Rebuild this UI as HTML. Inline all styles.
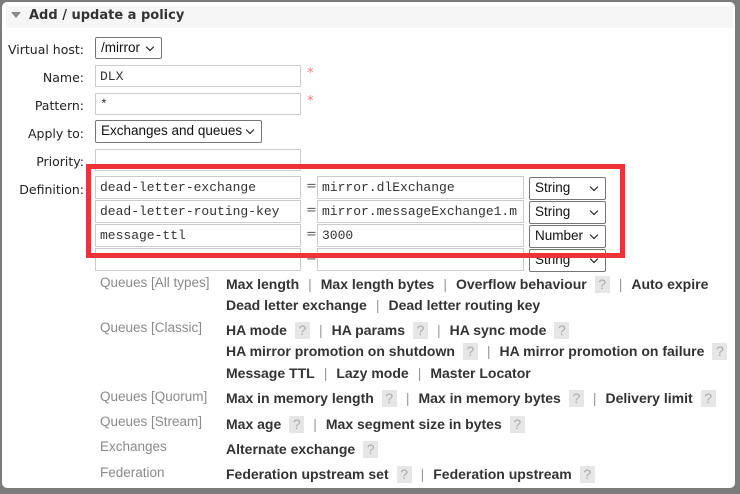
<!DOCTYPE html><html><head><style>
body{margin:0;width:740px;height:494px;background:#7b7b7b;font-family:"DejaVu Sans","Liberation Sans",sans-serif;position:relative;overflow:hidden}
#in{position:absolute;left:2px;top:2px;width:733px;height:486px;background:#fff;border-radius:5px}
.a{position:absolute;white-space:nowrap}
.hd{left:6px;top:6px;width:727px;height:22px;background:#f6f6f6}
.lab{font-size:12.5px;color:#222;text-align:right;width:84px;left:0}
.in{position:absolute;border:1px solid #ccc;background:#fff;box-sizing:border-box;font-family:"Liberation Mono",monospace;font-size:13px;color:#333;padding:3px 4px;overflow:hidden;white-space:nowrap}
.sel{position:absolute;border:1px solid #767676;border-radius:2px;background:#fff;box-sizing:border-box;font-family:"Liberation Sans",sans-serif;font-size:13.5px;color:#111;padding:2px 5px;white-space:nowrap;overflow:hidden}
.sel:after{content:"";position:absolute;right:8px;top:6px;width:5px;height:5px;border-right:1.6px solid #111;border-bottom:1.6px solid #111;transform:rotate(45deg)}
.cat{left:100px;font-size:13.5px;color:#8a8a8a;font-family:"Liberation Sans",sans-serif}
.ln{left:226px;font-size:14px;font-weight:bold;color:#333;font-family:"Liberation Sans",sans-serif}
.ln i{font-style:normal;font-weight:normal;color:#999;margin:0 9px}
.q{display:inline-block;background:#e6e6e6;color:#aaa;font-weight:normal;width:15px;text-align:center;margin-left:8px;line-height:17px}
.st{color:#f08080;font-size:13px}
</style></head><body><div id="in"></div>
<div class="a hd"></div>
<div class="a" style="left:11px;top:12px;width:0;height:0;border-left:5px solid transparent;border-right:5px solid transparent;border-top:6px solid #888"></div>
<div class="a" style="left:29px;top:8px;font-size:13px;font-weight:bold;color:#333">Add / update a policy</div>
<div class="a lab" style="top:42px">Virtual host:</div>
<div class="a lab" style="top:70px">Name:</div>
<div class="a lab" style="top:98px">Pattern:</div>
<div class="a lab" style="top:126px">Apply to:</div>
<div class="a lab" style="top:154px">Priority:</div>
<div class="a lab" style="top:182px">Definition:</div>
<div class="sel" style="left:95px;top:37px;width:67px;height:22px">/mirror</div>
<div class="in" style="left:95px;top:65px;width:206px;height:22px">DLX</div>
<div class="a st" style="left:307px;top:66px">*</div>
<div class="in" style="left:95px;top:93px;width:206px;height:22px">*</div>
<div class="a st" style="left:307px;top:94px">*</div>
<div class="sel" style="left:95px;top:120px;width:167px;height:23px">Exchanges and queues</div>
<div class="in" style="left:95px;top:149px;width:206px;height:22px"></div>
<div class="in" style="left:95px;top:176px;width:206px;height:23px">dead-letter-exchange</div>
<div class="in" style="left:95px;top:200px;width:206px;height:23px">dead-letter-routing-key</div>
<div class="in" style="left:95px;top:224px;width:206px;height:23px">message-ttl</div>
<div class="in" style="left:95px;top:248px;width:206px;height:23px"></div>
<div class="a" style="left:306px;top:179px;font-size:13px;color:#666">=</div>
<div class="a" style="left:306px;top:203px;font-size:13px;color:#666">=</div>
<div class="a" style="left:306px;top:227px;font-size:13px;color:#666">=</div>
<div class="a" style="left:306px;top:251px;font-size:13px;color:#666">=</div>
<div class="in" style="left:317px;top:176px;width:207px;height:23px">mirror.dlExchange</div>
<div class="in" style="left:317px;top:200px;width:207px;height:23px">mirror.messageExchange1.m</div>
<div class="in" style="left:317px;top:224px;width:207px;height:23px">3000</div>
<div class="in" style="left:317px;top:248px;width:207px;height:23px"></div>
<div class="sel" style="left:529px;top:177px;width:77px;height:23px">String</div>
<div class="sel" style="left:529px;top:201px;width:77px;height:23px">String</div>
<div class="sel" style="left:529px;top:225px;width:77px;height:23px">Number</div>
<div class="sel" style="left:529px;top:249px;width:77px;height:23px">String</div>
<div class="a" style="left:86px;top:164px;width:529px;height:84px;border:5px solid #ee3338"></div>
<div class="a cat" style="top:275px">Queues [All types]</div>
<div class="a ln" style="top:276px">Max length<i>|</i>Max length bytes<i>|</i>Overflow behaviour<span class="q">?</span><i>|</i>Auto expire</div>
<div class="a ln" style="top:297px">Dead letter exchange<i>|</i>Dead letter routing key</div>
<div class="a cat" style="top:320px">Queues [Classic]</div>
<div class="a ln" style="top:322px">HA mode<span class="q">?</span><i>|</i>HA params<span class="q">?</span><i>|</i>HA sync mode<span class="q">?</span></div>
<div class="a ln" style="top:343px">HA mirror promotion on shutdown<span class="q">?</span><i>|</i>HA mirror promotion on failure<span class="q">?</span></div>
<div class="a ln" style="top:365px">Message TTL<i>|</i>Lazy mode<i>|</i>Master Locator</div>
<div class="a cat" style="top:389px">Queues [Quorum]</div>
<div class="a ln" style="top:390px">Max in memory length<span class="q">?</span><i>|</i>Max in memory bytes<span class="q">?</span><i>|</i>Delivery limit<span class="q">?</span></div>
<div class="a cat" style="top:414px">Queues [Stream]</div>
<div class="a ln" style="top:416px">Max age<span class="q">?</span><i>|</i>Max segment size in bytes<span class="q">?</span></div>
<div class="a cat" style="top:439px">Exchanges</div>
<div class="a ln" style="top:441px">Alternate exchange<span class="q">?</span></div>
<div class="a cat" style="top:465px">Federation</div>
<div class="a ln" style="top:466px">Federation upstream set<span class="q">?</span><i>|</i>Federation upstream<span class="q">?</span></div>
</body></html>
